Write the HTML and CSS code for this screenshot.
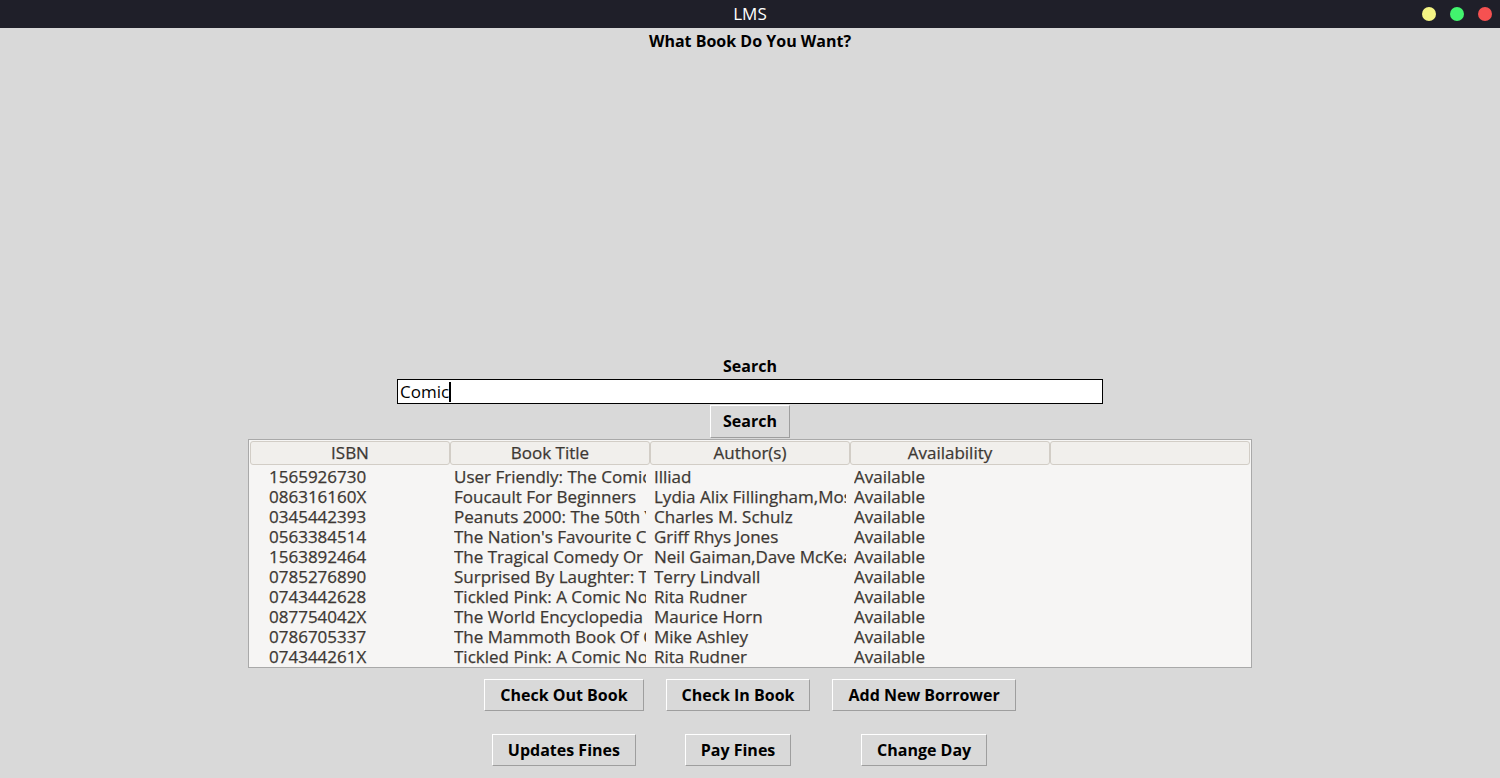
FILE: index.html
```html
<!DOCTYPE html>
<html>
<head>
<meta charset="utf-8">
<title>LMS</title>
<link rel="stylesheet" href="styles.css">
</head>
<body>
<div class="titlebar">
  <div></div>
  <div class="title">LMS</div>
  <div class="lights">
    <span class="light yellow"></span>
    <span class="light green"></span>
    <span class="light red"></span>
  </div>
</div>
<div class="main">
  <div class="heading">What Book Do You Want?</div>
  <div class="label">Search</div>
  <div class="entry">Comic<span class="caret"></span></div>
  <button class="btn search-btn">Search</button>
  <div class="table">
    <div class="thead">
      <div class="th">ISBN</div>
      <div class="th">Book Title</div>
      <div class="th">Author(s)</div>
      <div class="th">Availability</div>
      <div class="th"></div>
    </div>
    <div class="row"><div class="td isbn">1565926730</div><div class="td">User Friendly: The Comic Strip</div><div class="td">Illiad</div><div class="td">Available</div><div class="td"></div></div>
    <div class="row"><div class="td isbn">086316160X</div><div class="td">Foucault For Beginners</div><div class="td">Lydia Alix Fillingham,Moshe Süsser</div><div class="td">Available</div><div class="td"></div></div>
    <div class="row"><div class="td isbn">0345442393</div><div class="td">Peanuts 2000: The 50th Year</div><div class="td">Charles M. Schulz</div><div class="td">Available</div><div class="td"></div></div>
    <div class="row"><div class="td isbn">0563384514</div><div class="td">The Nation's Favourite Comic Poems</div><div class="td">Griff Rhys Jones</div><div class="td">Available</div><div class="td"></div></div>
    <div class="row"><div class="td isbn">1563892464</div><div class="td">The Tragical Comedy Or Comical Tragedy</div><div class="td">Neil Gaiman,Dave McKean</div><div class="td">Available</div><div class="td"></div></div>
    <div class="row"><div class="td isbn">0785276890</div><div class="td">Surprised By Laughter: The Comic World</div><div class="td">Terry Lindvall</div><div class="td">Available</div><div class="td"></div></div>
    <div class="row"><div class="td isbn">0743442628</div><div class="td">Tickled Pink: A Comic Novel</div><div class="td">Rita Rudner</div><div class="td">Available</div><div class="td"></div></div>
    <div class="row"><div class="td isbn">087754042X</div><div class="td">The World Encyclopedia Of Comics</div><div class="td">Maurice Horn</div><div class="td">Available</div><div class="td"></div></div>
    <div class="row"><div class="td isbn">0786705337</div><div class="td">The Mammoth Book Of Comic Fantasy</div><div class="td">Mike Ashley</div><div class="td">Available</div><div class="td"></div></div>
    <div class="row"><div class="td isbn">074344261X</div><div class="td">Tickled Pink: A Comic Novel</div><div class="td">Rita Rudner</div><div class="td">Available</div><div class="td"></div></div>
  </div>
  <div class="actions">
    <div class="cell"><button class="btn">Check Out Book</button></div>
    <div class="cell"><button class="btn">Check In Book</button></div>
    <div class="cell"><button class="btn">Add New Borrower</button></div>
    <div class="cell"><button class="btn">Updates Fines</button></div>
    <div class="cell"><button class="btn">Pay Fines</button></div>
    <div class="cell"><button class="btn">Change Day</button></div>
  </div>
</div>
</body>
</html>
```
FILE: styles.css
```css
html, body {
  margin: 0;
  padding: 0;
  background: #d9d9d9;
  font-family: "Open Sans", "Noto Sans", sans-serif;
  overflow: hidden;
}

.titlebar {
  height: 28px;
  background: #1f1f29;
  display: grid;
  grid-template-columns: 1fr auto 1fr;
  align-items: center;
  color: #ffffff;
}

.title {
  font-size: 17px;
  line-height: 28px;
}

.lights {
  justify-self: end;
  display: flex;
  gap: 14px;
  padding-right: 8px;
}

.light {
  width: 14px;
  height: 14px;
  border-radius: 50%;
  display: block;
}

.yellow { background: #f4f484; }
.green { background: #42f46e; }
.red { background: #f65151; }

.main {
  display: flex;
  flex-direction: column;
  align-items: center;
}

.heading {
  font-size: 16px;
  font-weight: 700;
  line-height: 24px;
  margin-top: 1px;
  color: #000;
}

.label {
  margin-top: 301px;
  font-size: 16px;
  font-weight: 700;
  line-height: 24px;
  color: #000;
}

.entry {
  width: 702px;
  height: 23px;
  border: 1px solid #000;
  background: #fff;
  font-size: 17px;
  line-height: 23px;
  padding-left: 2px;
  color: #000;
  display: flex;
  align-items: center;
  margin-top: 1px;
}

.caret {
  display: inline-block;
  width: 2px;
  height: 20px;
  background: #000;
}

.btn {
  font-family: "Open Sans", "Noto Sans", sans-serif;
  font-size: 16px;
  font-weight: 700;
  color: #000;
  background: #d9d9d9;
  border: 1px solid;
  border-color: #ffffff #9e9e9e #9e9e9e #ffffff;
  height: 33px;
  padding: 0 15px;
  margin: 0;
  border-radius: 0;
  line-height: 31px;
}

.search-btn {
  width: 80px;
  padding: 0;
  margin-top: 1px;
}

.table {
  margin-top: 1px;
  width: 1000px;
  height: 225px;
  border: 1px solid #a9a9a9;
  background: #f6f5f4;
  padding: 1px;
  color: #3d3833;
  font-size: 17px;
  -webkit-text-stroke: 0.25px #3d3833;
}

.thead {
  display: grid;
  grid-template-columns: repeat(5, 200px);
  height: 24px;
  margin-bottom: 2px;
}

.th {
  background: #f1efec;
  border: 1px solid #d2cdc6;
  border-radius: 3px;
  text-align: center;
  line-height: 22px;
}

.row {
  display: grid;
  grid-template-columns: repeat(5, 200px);
  height: 20px;
}

.td {
  white-space: nowrap;
  overflow: hidden;
  line-height: 20px;
  margin: 0 4px;
}

.td.isbn {
  margin-left: 19px;
}

.actions {
  margin-top: 11px;
  display: grid;
  grid-template-columns: repeat(3, auto);
  column-gap: 22px;
  row-gap: 23px;
}

.cell {
  display: flex;
  justify-content: center;
}

.actions .btn {
  height: 32px;
  line-height: 30px;
}
```
